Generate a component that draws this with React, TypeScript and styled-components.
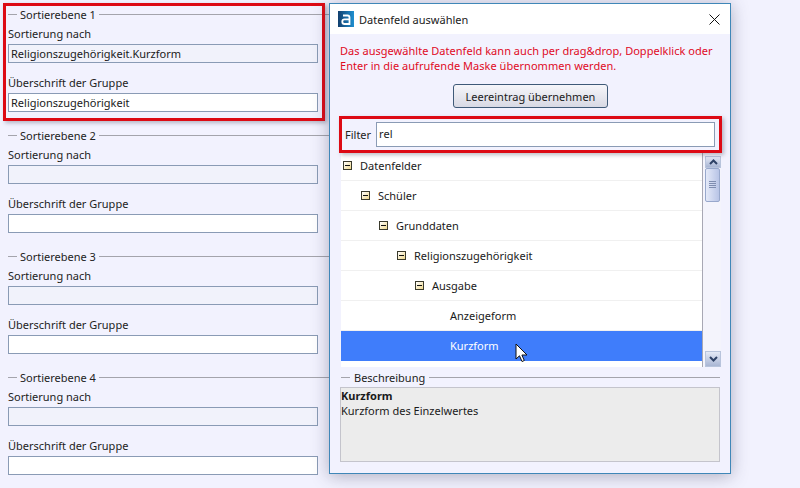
import React from "react";
import styled, { createGlobalStyle } from "styled-components";

const Global = createGlobalStyle`
  html, body { margin: 0; padding: 0; width: 800px; height: 488px; overflow: hidden; background: #f2f2fe; }
  body { font-family: "Noto Sans", "Open Sans", sans-serif; font-size: 11px; color: #1a1a1a; }
  * { box-sizing: border-box; }
`;

const Page = styled.div`
  position: relative;
  width: 800px;
  height: 488px;
  overflow: hidden;
  background: #f2f2fe;
`;

const LeftColumn = styled.div`
  width: 329px;
  padding: 6px 0 0 8px;
  display: flex;
  flex-direction: column;
  gap: 2px;
`;

const Level = styled.section`
  height: 119px;
  display: flex;
  flex-direction: column;
`;

const Legend = styled.div`
  height: 16px;
  display: flex;
  align-items: center;
  gap: 3px;
  font-size: 11px;
  color: #222;
  white-space: nowrap;
  &::before { content: ""; width: 9px; height: 1px; background: #a4a4ac; flex: none; }
  &::after { content: ""; flex: 1; height: 1px; background: #a4a4ac; }
`;

const FieldLabel = styled.label`
  display: block;
  height: 15px;
  line-height: 15px;
  font-size: 11px;
  color: #222;
`;

const Input = styled.div<{ $muted?: boolean }>`
  height: 19px;
  border: 1px solid #8a9bb5;
  background: ${(p) => (p.$muted ? "#f1f2fb" : "#fff")};
  padding-left: 2px;
  font-size: 11px;
  line-height: 17px;
  color: #1a1a1a;
`;

const LevelFields = styled.div`
  width: 310px;
  display: flex;
  flex-direction: column;
`;

const FirstLabel = styled(FieldLabel)`
  margin-top: 4px;
  margin-bottom: 3px;
`;

const SecondLabel = styled(FieldLabel)`
  margin-top: 12px;
  margin-bottom: 3px;
`;

const RedBox = styled.div`
  position: absolute;
  left: 3px;
  top: 3px;
  width: 322px;
  height: 118px;
  border: 3px solid #dd0a14;
  box-shadow: 2px 2px 4px rgba(70, 70, 90, 0.35);
  pointer-events: none;
`;

const Dialog = styled.div`
  position: absolute;
  left: 329px;
  top: 3px;
  width: 402px;
  height: 471px;
  border: 1px solid #3f87b8;
  background: #f2f2fe;
  box-shadow: 0 2px 16px rgba(60, 60, 90, 0.38);
  display: flex;
  flex-direction: column;
`;

const TitleBar = styled.header`
  height: 30px;
  flex: none;
  background: #fff;
  display: flex;
  align-items: center;
  padding: 0 10px 0 8px;
  gap: 5px;
  font-size: 11px;
  color: #1a1a1a;
`;

const TitleText = styled.span`
  flex: 1;
`;

const DialogBody = styled.div`
  flex: 1;
  padding: 10px 10px 12px 10px;
  display: flex;
  flex-direction: column;
`;

const Notice = styled.p`
  margin: -1px 0 1px;
  height: 30px;
  font-size: 11px;
  line-height: 15px;
  letter-spacing: 0.03px;
  color: #e00a1e;
  white-space: nowrap;
`;

const ButtonRow = styled.div`
  display: flex;
  justify-content: center;
  margin-top: 10px;
  height: 24px;
`;

const Button = styled.button`
  width: 155px;
  height: 24px;
  margin-left: 1px;
  border: 1px solid #3f5a78;
  border-radius: 3px;
  background: linear-gradient(#f6f6fa, #d8d9e4);
  font-family: inherit;
  font-size: 11px;
  color: #1a1a1a;
  padding: 0;
`;

const FilterRow = styled.div`
  position: relative;
  display: flex;
  align-items: center;
  height: 25px;
  margin-top: 14px;
  gap: 5px;
  padding: 0 5px 0 5px;
  font-size: 11px;
  color: #222;
`;

const FilterInput = styled.div`
  flex: 1;
  height: 25px;
  border: 1px solid #8a9bb5;
  background: #fff;
  padding-left: 2px;
  line-height: 22px;
  font-size: 11px;
`;

const FilterHighlight = styled.div`
  position: absolute;
  left: -1px;
  right: -2px;
  top: -6px;
  bottom: -6px;
  border: 3px solid #dd0a14;
  box-shadow: 2px 2px 4px rgba(70, 70, 90, 0.35);
  pointer-events: none;
`;

const TreePanel = styled.div`
  margin: 4px 0 0 1px;
  width: 380px;
  height: 216px;
  display: flex;
  background: #fff;
  overflow: hidden;
`;

const TreeList = styled.div`
  width: 362px;
  border-right: 1px solid #a8a8b4;
  display: flex;
  flex-direction: column;
`;

const TreeRow = styled.div<{ $depth: number; $selected?: boolean }>`
  height: 30px;
  flex: none;
  display: flex;
  align-items: center;
  gap: 8px;
  padding-left: ${(p) => 2 + p.$depth * 18}px;
  font-size: 11px;
  color: ${(p) => (p.$selected ? "#fff" : "#1a1a1a")};
  background: ${(p) => (p.$selected ? "#3f7dfb" : "#fff")};
  border-bottom: 1px solid ${(p) => (p.$selected ? "#3f7dfb" : "#f0f0f0")};
`;

const LeafSpacer = styled.span`
  width: 9px;
  flex: none;
`;

const Expander = styled.span`
  width: 9px;
  height: 9px;
  flex: none;
  border: 1px solid #3a3a2c;
  background: linear-gradient(135deg, #fff, #f0d98e);
  display: flex;
  align-items: center;
  justify-content: center;
  &::before { content: ""; width: 5px; height: 1px; background: #111; }
`;

const Scrollbar = styled.div`
  width: 18px;
  background: #f4f4fc;
  padding-left: 2px;
  display: flex;
  flex-direction: column;
  justify-content: space-between;
`;

const ScrollTop = styled.div`
  display: flex;
  flex-direction: column;
  margin-top: 5px;
`;

const ScrollButton = styled.div<{ $tall?: boolean }>`
  width: 16px;
  height: ${(p) => (p.$tall ? 16 : 12)}px;
  border: 1px solid #b8c4dc;
  background: linear-gradient(#e4e9f6, #a9b6d4);
  display: flex;
  align-items: center;
  justify-content: center;
`;

const Thumb = styled.div`
  width: 15px;
  height: 34px;
  border: 1px solid #98a8cc;
  border-radius: 2px;
  background: linear-gradient(90deg, #e4e9f8, #b8c4e6);
  display: flex;
  align-items: center;
  justify-content: center;
`;

const DescriptionLegend = styled(Legend)`
  margin-top: 2px;
  height: 16px;
  padding-left: 1px;
  gap: 4px;
`;

const DescriptionBox = styled.div`
  height: 75px;
  margin-top: 2px;
  border: 1px solid #c4c4cc;
  background: #ececec;
  padding: 0;
  font-size: 11px;
  line-height: 15px;
  color: #1a1a1a;
`;

const Strong = styled.div`
  font-weight: 700;
`;

const Pointer = styled.svg`
  position: absolute;
  left: 515px;
  top: 343px;
`;

const Logo = () => (
  <svg width="16" height="16" viewBox="0 0 16 16">
    <defs>
      <linearGradient id="lg" x1="0" x2="1" y1="0" y2="0">
        <stop offset="0" stopColor="#123f6e" />
        <stop offset="1" stopColor="#1f8fd0" />
      </linearGradient>
    </defs>
    <rect width="16" height="16" fill="url(#lg)" />
    <path d="M5 4.5h4.5a2 2 0 0 1 2 2V13H6.6a2.2 2.2 0 0 1 0-4.6h4.9" fill="none" stroke="#fff" strokeWidth="1.8" />
  </svg>
);

const CloseIcon = () => (
  <svg width="11" height="11" viewBox="0 0 11 11">
    <path d="M.5.5l10 10M10.5.5l-10 10" stroke="#111" strokeWidth="1" />
  </svg>
);

const Grip = () => (
  <svg width="8" height="8" viewBox="0 0 8 8">
    <path d="M0 .5h7M0 2.5h7M0 4.5h7M0 6.5h7" stroke="#7f8db0" />
  </svg>
);

const Chevron = ({ down }: { down?: boolean }) => (
  <svg width="9" height="6" viewBox="0 0 9 6">
    <path d={down ? "M1 1l3.5 3.5L8 1" : "M1 5l3.5-3.5L8 5"} fill="none" stroke="#2f4266" strokeWidth="2" />
  </svg>
);

const levels = [
  { n: 1, sort: "Religionszugehörigkeit.Kurzform", head: "Religionszugehörigkeit" },
  { n: 2, sort: "", head: "" },
  { n: 3, sort: "", head: "" },
  { n: 4, sort: "", head: "" },
];

const tree = [
  { t: "Datenfelder", d: 0, open: true },
  { t: "Schüler", d: 1, open: true },
  { t: "Grunddaten", d: 2, open: true },
  { t: "Religionszugehörigkeit", d: 3, open: true },
  { t: "Ausgabe", d: 4, open: true },
  { t: "Anzeigeform", d: 5, open: false },
  { t: "Kurzform", d: 5, open: false, selected: true },
];

export default function App() {
  return (
    <Page>
      <Global />
      <LeftColumn>
        {levels.map((l) => (
          <Level key={l.n}>
            <Legend>Sortierebene {l.n}</Legend>
            <LevelFields>
              <FirstLabel>Sortierung nach</FirstLabel>
              <Input $muted>{l.sort}</Input>
              <SecondLabel>Überschrift der Gruppe</SecondLabel>
              <Input>{l.head}</Input>
            </LevelFields>
          </Level>
        ))}
      </LeftColumn>
      <RedBox />
      <Dialog>
        <TitleBar>
          <Logo />
          <TitleText>Datenfeld auswählen</TitleText>
          <CloseIcon />
        </TitleBar>
        <DialogBody>
          <Notice>
            Das ausgewählte Datenfeld kann auch per drag&amp;drop, Doppelklick oder
            <br />
            Enter in die aufrufende Maske übernommen werden.
          </Notice>
          <ButtonRow>
            <Button>Leereintrag übernehmen</Button>
          </ButtonRow>
          <FilterRow>
            <span>Filter</span>
            <FilterInput>rel</FilterInput>
            <FilterHighlight />
          </FilterRow>
          <TreePanel>
            <TreeList>
              {tree.map((r) => (
                <TreeRow key={r.t} $depth={r.d} $selected={r.selected}>
                  {r.open ? <Expander /> : <LeafSpacer />}
                  <span>{r.t}</span>
                </TreeRow>
              ))}
            </TreeList>
            <Scrollbar>
              <ScrollTop>
                <ScrollButton>
                  <Chevron />
                </ScrollButton>
                <Thumb>
                  <Grip />
                </Thumb>
              </ScrollTop>
              <ScrollButton $tall>
                <Chevron down />
              </ScrollButton>
            </Scrollbar>
          </TreePanel>
          <DescriptionLegend>Beschreibung</DescriptionLegend>
          <DescriptionBox>
            <Strong>Kurzform</Strong>
            Kurzform des Einzelwertes
          </DescriptionBox>
        </DialogBody>
      </Dialog>
      <Pointer width="14" height="20" viewBox="0 0 14 20">
        <path d="M1 1v15l3.5-3.2 2.5 5.7 2.3-1-2.4-5.5H12z" fill="#fff" stroke="#111" strokeWidth="1" />
      </Pointer>
    </Page>
  );
}
